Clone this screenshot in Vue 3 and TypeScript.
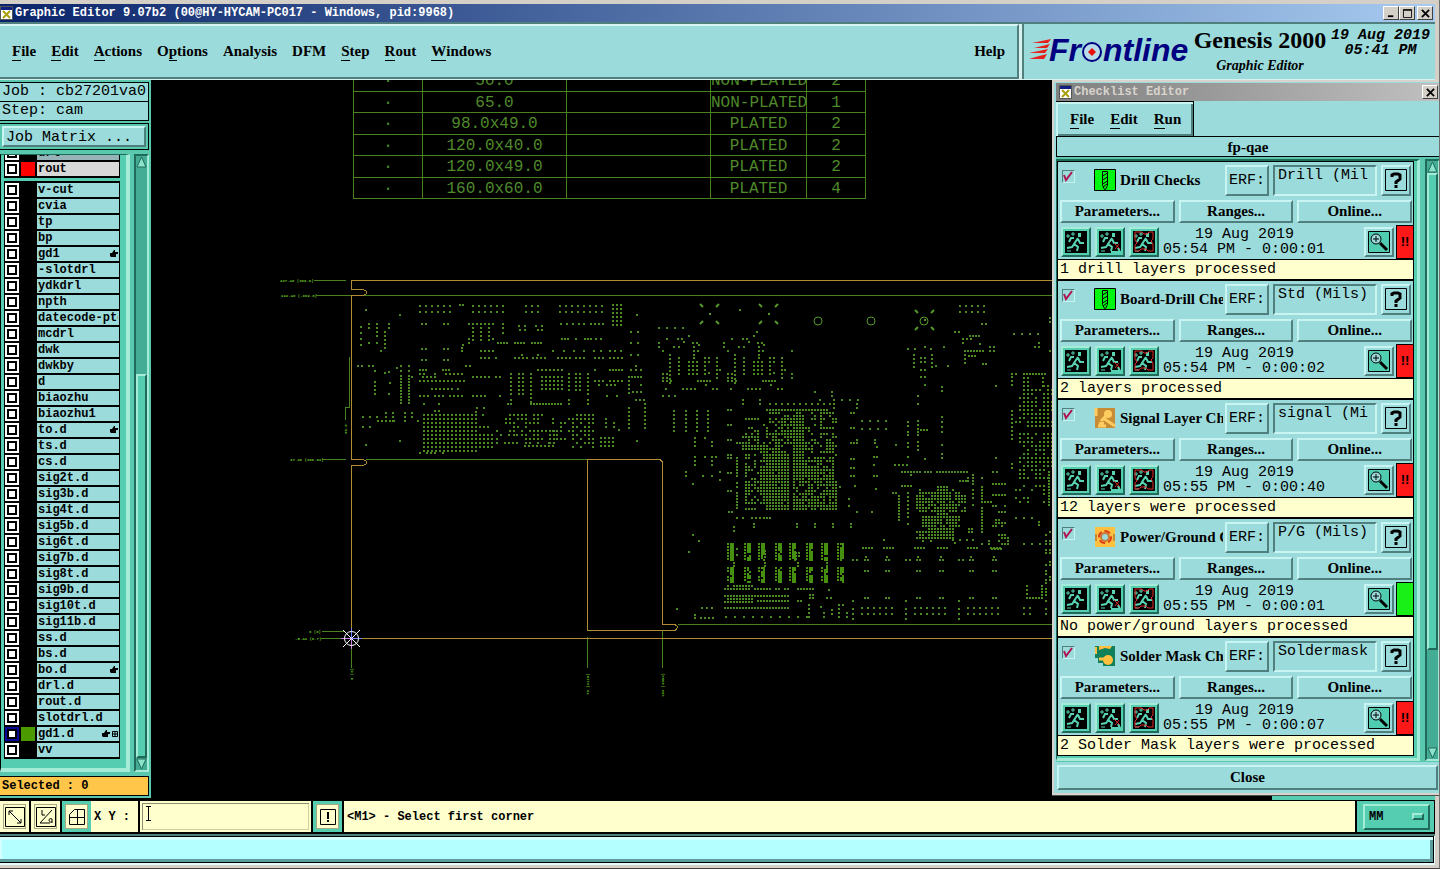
<script setup lang="ts">
import { ref } from 'vue'

interface MenuItem { before: string; key: string; after: string }
interface Layer { name: string; color?: string; active?: boolean; tone?: string; hand?: boolean; grid?: boolean }
interface Check {
  title: string; icon: string; erf: string; stamp: string; message: string; ok?: boolean
}
type Grid = [number, number, number?, number?, number?, number?, number?]

const menus: MenuItem[] = [
  { before: '', key: 'F', after: 'ile' },
  { before: '', key: 'E', after: 'dit' },
  { before: '', key: 'A', after: 'ctions' },
  { before: 'O', key: 'p', after: 'tions' },
  { before: 'Analysis', key: '', after: '' },
  { before: 'DFM', key: '', after: '' },
  { before: '', key: 'S', after: 'tep' },
  { before: '', key: 'R', after: 'out' },
  { before: '', key: 'W', after: 'indows' },
]
const checkMenus: MenuItem[] = [
  { before: '', key: 'F', after: 'ile' },
  { before: '', key: 'E', after: 'dit' },
  { before: '', key: 'R', after: 'un' },
]

const topLayers: Layer[] = [
  { name: 'drl', tone: 'dim' },
  { name: 'rout', color: '#ff0000', tone: 'grey' },
]
const layers: Layer[] = [
  ...['v-cut', 'cvia', 'tp', 'bp'].map((name) => ({ name })),
  { name: 'gd1', hand: true },
  ...['-slotdrl', 'ydkdrl', 'npth', 'datecode-pto', 'mcdrl', 'dwk', 'dwkby', 'd', 'biaozhu', 'biaozhu1'].map((name) => ({ name })),
  { name: 'to.d', hand: true },
  ...['ts.d', 'cs.d', 'sig2t.d', 'sig3b.d', 'sig4t.d', 'sig5b.d', 'sig6t.d', 'sig7b.d', 'sig8t.d', 'sig9b.d', 'sig10t.d', 'sig11b.d', 'ss.d', 'bs.d'].map((name) => ({ name })),
  { name: 'bo.d', hand: true },
  ...['drl.d', 'rout.d', 'slotdrl.d'].map((name) => ({ name })),
  { name: 'gd1.d', color: '#4a9a00', active: true, hand: true, grid: true },
  { name: 'vv' },
]
const groups: Layer[][] = [topLayers, layers]

const checks = ref<Check[]>([
  { title: 'Drill Checks', icon: 'drill', erf: 'Drill (Mil', stamp: '05:54 PM - 0:00:01', message: '1 drill layers processed' },
  { title: 'Board-Drill Checks', icon: 'drill', erf: 'Std (Mils)', stamp: '05:54 PM - 0:00:02', message: '2 layers processed' },
  { title: 'Signal Layer Checks', icon: 'signal', erf: 'signal (Mi', stamp: '05:55 PM - 0:00:40', message: '12 layers were processed' },
  { title: 'Power/Ground Checks', icon: 'power', erf: 'P/G (Mils)', stamp: '05:55 PM - 0:00:01', message: 'No power/ground layers processed', ok: true },
  { title: 'Solder Mask Checks', icon: 'mask', erf: 'Soldermask', stamp: '05:55 PM - 0:00:07', message: '2 Solder Mask layers were processed' },
])

const drillTable: string[][] = [
  ['·', '50.0', '', 'NON-PLATED', '2'],
  ['·', '65.0', '', 'NON-PLATED', '1'],
  ['·', '98.0x49.0', '', 'PLATED', '2'],
  ['·', '120.0x40.0', '', 'PLATED', '2'],
  ['·', '120.0x49.0', '', 'PLATED', '2'],
  ['·', '160.0x60.0', '', 'PLATED', '4'],
]

/* Pad arrays: x, y, columns, rows, x pitch, y pitch, fill ratio */
const connector: Grid[] = [
  [658, 342, 1, 2, 0, 4], [666, 338], [677, 338, 2, 1, 4], [683, 341], [688, 335], [692, 342, 2, 1, 4], [698, 344],
  [673, 346, 2, 1, 5], [662, 350], [693, 346, 1, 3, 0, 4], [697, 350], [669, 354, 1, 8, 0, 4], [678, 357, 1, 5, 0, 4],
  [688, 361, 3, 4, 4, 4], [693, 357], [704, 357, 2, 2, 4, 4], [704, 365, 1, 3, 0, 4], [708, 372], [716, 357, 1, 6, 0, 4],
  [719, 369], [697, 380, 5, 1, 3], [682, 388, 4, 1, 4], [712, 388, 2, 1, 4], [705, 384], [662, 373, 2, 2, 4, 4], [662, 380, 3, 1, 4], [665, 388],
]
const combs: Grid[] = [727, 744, 758, 775, 789, 806, 821, 837].flatMap((x) => [
  [x, 543, 1, 6, 3, 3], [x + 3, 543, 2, 9, 2, 2, 0.88], [x, 567, 1, 5, 3, 3, 0.8], [x + 3, 567, 2, 8, 2, 2, 0.88],
] as Grid[])
const pads: Grid[] = [
  [419, 305, 6, 2, 6, 6], [459, 304, 2, 1, 3], [472, 305, 6, 2, 6, 6], [525, 305, 3, 2, 6, 6], [559, 305, 8, 2, 6, 6],
  [612, 304, 3, 6, 4, 4], [636, 314], [365, 309], [399, 314],
  [421, 323, 2, 1, 4], [443, 323, 2, 1, 4], [468, 323, 7, 1, 4], [502, 323], [560, 323, 4, 1, 6], [583, 323], [590, 323, 4, 1, 4],
  [360, 326, 1, 4, 0, 6], [368, 323, 1, 2, 0, 4], [368, 342], [376, 323, 1, 4, 0, 4], [376, 342], [388, 323, 1, 2, 0, 4], [384, 331, 1, 5, 0, 4], [380, 350],
  [472, 327, 1, 4, 0, 4], [468, 338, 1, 2, 0, 4], [480, 327, 1, 4, 0, 4], [488, 327, 1, 4, 0, 4], [492, 338], [502, 327, 1, 2, 0, 5],
  [518, 325], [524, 325], [519, 329, 2, 1, 5], [535, 325], [541, 325], [537, 329, 2, 1, 4],
  [497, 342, 4, 1, 3], [514, 342, 4, 1, 3], [531, 342, 4, 1, 3], [561, 338, 3, 1, 3], [575, 338], [584, 338, 3, 1, 3], [595, 338, 2, 1, 5],
  [462, 344], [461, 347], [461, 350], [421, 348, 2, 1, 4], [443, 348, 2, 1, 4], [421, 359, 2, 1, 4], [443, 359, 2, 1, 4],
  [480, 350, 4, 1, 4], [552, 350], [563, 350, 2, 1, 10], [583, 350, 2, 1, 10], [600, 350], [609, 350, 2, 1, 5], [620, 350],
  [480, 357, 3, 1, 4], [495, 357], [514, 357, 4, 1, 4], [521, 354], [532, 357, 4, 1, 4], [537, 354], [557, 357, 4, 1, 4], [575, 357, 3, 1, 4], [594, 357, 3, 1, 4], [609, 357, 4, 1, 4],
  [630, 331, 2, 1, 7], [630, 342, 2, 1, 7], [630, 354, 2, 1, 7], [357, 365, 2, 1, 4], [368, 365, 2, 1, 4], [465, 365, 2, 1, 4],
  [374, 370], [374, 381, 1, 4, 0, 4], [384, 372], [388, 371], [389, 382], [388, 393], [396, 367], [411, 376], [400, 365, 1, 3, 0, 5], [400, 378, 1, 4, 0, 3],
  [400, 390, 1, 5, 0, 3], [408, 365, 1, 3, 0, 5], [408, 378, 1, 4, 0, 3], [408, 390, 1, 5, 0, 3],
  [419, 369, 3, 1, 3], [442, 369, 3, 1, 3], [419, 373, 2, 1, 4], [434, 373], [445, 373, 5, 1, 4], [419, 380, 12, 1, 4], [422, 376, 4, 1, 4], [431, 388, 6, 1, 4], [457, 388],
  [419, 395, 3, 1, 4], [434, 395, 3, 1, 4], [449, 395, 4, 1, 4], [423, 403], [438, 403], [472, 376, 4, 1, 4], [488, 376], [495, 376, 2, 1, 4],
  [472, 395, 4, 1, 4], [499, 395], [476, 407, 2, 1, 7], [475, 411], [482, 414],
  [510, 373, 1, 6, 0, 4], [510, 399, 1, 2, 0, 4], [507, 403], [518, 373, 2, 6, 4, 4], [530, 373, 1, 8, 0, 4], [530, 403, 11, 1, 3],
  [537, 369, 7, 1, 4], [541, 376, 6, 4, 4, 4], [568, 373, 1, 5, 0, 4], [568, 399, 1, 2, 0, 4], [575, 373, 2, 5, 4, 4], [587, 373, 1, 6, 0, 4], [587, 399, 1, 2, 0, 4],
  [594, 369], [609, 369, 5, 1, 3], [594, 380, 3, 1, 4], [609, 380, 4, 1, 4], [598, 384, 5, 1, 4, 4, 0.7], [606, 395, 2, 1, 10],
  [628, 376, 5, 1, 3], [628, 380, 1, 4, 0, 4], [640, 384], [640, 391], [632, 391, 2, 1, 4], [635, 365], [630, 369, 3, 1, 5], [635, 399, 3, 1, 4], [628, 407, 1, 6, 0, 4], [644, 403, 1, 7, 0, 4],
  [434, 410, 2, 1, 4], [423, 414, 14, 10, 4, 4], [479, 434, 4, 4, 4, 4], [419, 452], [426, 452, 3, 1, 4], [442, 452],
  [479, 418, 4, 3, 4, 4, 0.35], [496, 430, 8, 4, 4, 4, 0.35], [505, 414, 10, 6, 4, 4, 0.65], [525, 430, 8, 4, 4, 4, 0.7], [524, 445, 8, 1, 4], [548, 418, 6, 7, 4, 4, 0.3],
  [572, 414, 6, 9, 4, 4, 0.65], [600, 437, 4, 3, 4, 4], [605, 418, 1, 3, 0, 4], [613, 422, 1, 2, 0, 4], [618, 429],
  [362, 416, 3, 1, 7], [362, 426, 2, 1, 7], [377, 420, 5, 1, 4], [385, 412, 1, 3, 0, 4], [392, 412, 1, 3, 0, 4], [404, 412, 1, 3, 0, 4], [411, 412, 1, 2, 0, 4], [417, 420], [365, 444], [399, 440], [636, 440],
  ...connector, ...connector.map(([x, y, ...r]) => [x + 65, y, ...r] as Grid),
  [658, 327, 4, 1, 8], [756, 331], [739, 309], [791, 350], [791, 373, 1, 2, 0, 4], [662, 395, 3, 1, 6], [742, 399, 1, 2, 0, 4], [759, 399, 1, 2, 0, 4],
  [673, 410, 1, 6, 0, 4], [685, 410, 1, 6, 0, 4], [696, 410, 1, 6, 0, 4], [707, 410, 1, 6, 0, 4],
  [694, 437, 1, 3, 0, 4], [704, 437], [711, 441, 1, 2, 0, 4], [694, 456, 1, 3, 0, 4], [711, 456, 1, 3, 0, 4], [704, 456], [715, 456],
  [685, 471, 1, 2, 0, 4], [702, 475, 2, 1, 9], [719, 471, 1, 2, 0, 8], [692, 483],
  [727, 409, 2, 1, 3], [727, 424, 2, 1, 3], [727, 439, 2, 1, 3], [727, 454, 2, 2, 3, 3], [727, 472, 2, 1, 3], [727, 490, 2, 1, 3], [728, 511, 2, 1, 3],
  [736, 442, 2, 1, 3], [736, 457, 1, 7, 0, 3], [736, 482, 1, 2, 0, 4], [736, 492, 1, 6, 0, 3],
  [769, 403, 11, 1, 6], [766, 409, 21, 1, 3], [769, 412, 4, 1, 3], [781, 412, 18, 2, 3, 3, 0.6],
  [745, 418, 5, 1, 3], [763, 418, 6, 8, 3, 3, 0.5], [781, 418, 7, 10, 3, 3, 0.8], [793, 418, 4, 17, 3, 3], [805, 418, 8, 12, 3, 3, 0.4], [820, 418, 6, 16, 3, 3, 0.45],
  [745, 427, 5, 5, 3, 3, 0.6], [742, 436, 6, 5, 3, 3, 0.9], [757, 442, 10, 6, 3, 3, 0.65], [826, 442, 3, 4, 3, 3],
  [745, 454, 6, 17, 3, 3, 0.6], [763, 454, 9, 19, 3, 3, 0.95], [793, 466, 14, 15, 3, 3, 0.82], [793, 457, 14, 3, 3, 3, 0.5], [826, 481, 4, 10, 3, 3, 0.85], [745, 508, 4, 1, 3],
  [736, 517, 2, 1, 6], [751, 517, 3, 1, 4], [763, 517, 3, 1, 3], [733, 526, 1, 2, 0, 4], [753, 523, 1, 2, 0, 3], [796, 523, 1, 2, 0, 3], [814, 523, 1, 2, 0, 3], [832, 523, 1, 2, 0, 3], [850, 523, 1, 2, 0, 3],
  [814, 391], [819, 399], [831, 391, 1, 2, 0, 4], [833, 399, 4, 1, 8], [833, 403, 1, 2, 0, 4], [856, 403, 1, 2, 0, 4], [850, 412, 2, 1, 3], [850, 427, 2, 1, 3],
  [850, 442, 3, 1, 3], [856, 439], [850, 458, 2, 1, 3], [861, 420, 4, 2, 8, 8], [874, 439, 1, 2, 0, 3], [876, 446], [873, 456, 2, 1, 3], [873, 464], [873, 475, 2, 1, 3],
  [895, 444], [907, 421, 1, 2, 0, 4], [907, 431, 1, 2, 0, 3], [907, 442, 1, 2, 0, 4], [907, 456], [917, 395, 1, 2, 0, 8], [917, 420, 1, 2, 0, 4], [917, 428, 1, 3, 0, 3],
  [920, 429, 3, 1, 3], [917, 441, 1, 3, 0, 4], [941, 386, 1, 2, 0, 4], [941, 416, 1, 4, 0, 5], [941, 444], [941, 453, 1, 2, 0, 4], [924, 458], [894, 464, 4, 1, 4],
  [907, 348, 2, 1, 7], [924, 346], [930, 348], [943, 346], [913, 354, 1, 4, 0, 4], [920, 357, 2, 2, 4, 4], [920, 369, 2, 1, 4], [920, 376, 2, 1, 4], [931, 354, 1, 4, 0, 4], [935, 365], [947, 365], [924, 384],
  [959, 305, 5, 2, 6, 6], [981, 323, 2, 1, 4], [954, 331, 2, 1, 4], [969, 335, 4, 1, 3], [962, 338, 3, 1, 4], [962, 342], [979, 343], [964, 350, 7, 1, 3], [964, 354, 1, 3, 0, 4], [968, 355, 3, 1, 3], [989, 346, 2, 2, 4, 4], [982, 363, 2, 1, 3],
  [1013, 333, 4, 1, 8], [1038, 342, 1, 2, 0, 4], [1034, 346], [1049, 317, 1, 2, 0, 4], [1049, 350], [995, 385], [995, 457],
  [1011, 373, 2, 1, 4], [1011, 376, 1, 3, 0, 4], [1023, 373, 8, 1, 3], [1023, 377, 2, 4, 4, 4], [1042, 377, 1, 3, 0, 4], [1019, 385, 9, 9, 4, 4, 0.75], [1011, 410, 1, 8, 0, 4], [1015, 421, 2, 1, 4], [1027, 421, 7, 2, 4, 4], [1019, 433, 9, 9, 4, 4, 0.75],
  [901, 471, 7, 1, 3], [924, 471, 3, 1, 3], [936, 471, 11, 1, 3], [910, 474], [959, 480, 3, 1, 3], [967, 477, 1, 2, 0, 3], [892, 492, 2, 1, 3], [898, 495, 1, 9, 0, 3], [901, 485, 4, 1, 3], [907, 492, 1, 7, 0, 4], [907, 523],
  [916, 489, 2, 3, 3, 3, 0.6], [919, 492, 6, 7, 3, 3, 0.9], [937, 486, 4, 10, 3, 3, 0.9], [949, 495, 6, 6, 3, 3, 0.8], [916, 498, 1, 4, 3, 3], [922, 516, 13, 4, 3, 3, 0.9], [928, 528, 9, 1, 3], [916, 531, 13, 3, 3, 3, 0.9], [949, 489, 4, 2, 3, 3, 0.6],
  [922, 540, 2, 1, 8], [952, 539, 3, 1, 7], [954, 542], [972, 474, 1, 4, 0, 3], [972, 489, 1, 3, 0, 4], [972, 504], [968, 528, 2, 2, 3, 3], [981, 477], [981, 486, 1, 5, 0, 3], [981, 501, 4, 1, 3], [981, 507, 1, 9, 0, 3], [972, 539], [981, 543],
  [992, 471, 2, 1, 4], [992, 483, 5, 1, 3], [992, 494, 5, 1, 3], [992, 505, 5, 3, 3, 3, 0.5], [992, 519, 5, 3, 3, 3, 0.6], [988, 540, 1, 2, 0, 3], [998, 534, 4, 4, 3, 3, 0.55], [991, 548, 4, 1, 3],
  [1011, 463, 1, 2, 0, 4], [1019, 469, 8, 3, 4, 4, 0.6], [1015, 485, 8, 5, 4, 4, 0.4], [1048, 471, 1, 12, 0, 3], [1015, 517, 3, 1, 8], [1038, 521, 1, 2, 0, 3], [1007, 543], [1023, 543, 3, 1, 8],
  [1045, 531, 2, 18, 4, 3, 0.55], [1026, 585, 1, 3, 0, 4], [1026, 597, 6, 1, 3], [1041, 585, 2, 4, 4, 3, 0.7],
  [692, 534], [698, 540], [688, 551], [839, 486], [848, 498, 1, 2, 0, 7], [856, 511], [871, 511], [883, 539], [850, 467, 2, 1, 3], [850, 475, 2, 1, 3], [854, 485], [875, 488],
  [724, 588, 22, 1, 3, 3, 0.85], [727, 585, 10, 1, 3, 3, 0.6], [724, 595, 22, 1, 3], [724, 601, 10, 1, 3], [727, 598, 9, 1, 3], [757, 600, 11, 1, 3], [724, 607, 22, 1, 3], [725, 616, 10, 1, 9],
  [797, 588, 6, 1, 3], [809, 594, 2, 2, 3, 3], [797, 600, 2, 1, 3], [808, 604, 1, 4, 0, 4], [828, 589], [826, 597, 2, 1, 4], [820, 606], [823, 612, 1, 2, 0, 4], [831, 609, 1, 2, 0, 4], [838, 604, 2, 1, 4], [838, 608, 1, 3, 0, 4], [846, 612, 1, 2, 0, 4],
  [676, 608], [694, 614, 1, 2, 0, 3], [701, 607, 3, 1, 5], [700, 617, 2, 1, 4], [708, 617, 2, 1, 4],
  [733, 548, 2, 3, 3, 3, 0.5], [764, 550, 1, 3, 3, 3], [795, 549, 2, 4, 3, 3, 0.5], [826, 546, 1, 3, 3, 3], [733, 562, 1, 2, 3, 3], [764, 562, 1, 2, 3, 3], [797, 562, 1, 2, 3, 3], [826, 562, 1, 2, 3, 3],
  ...[862, 883, 914, 937, 967, 990].flatMap((x) => [[x, 547, 4, 1, 3], [x + 3, 556], [x + 2, 559, 2, 1, 3], [x + 2, 570, 2, 1, 3], [x + 2, 597, 2, 1, 3]] as Grid[]),
  ...[852, 905, 958].flatMap((x) => [[x, 559, 2, 1, 4], [x, 600], [x, 608, 1, 3, 0, 5], [x + 9, 607, 6, 2, 6, 6]] as Grid[]),
  [1023, 607, 2, 2, 6, 6], [1045, 600], [1045, 608, 1, 2, 0, 5],
]

function hash(a: number, b: number): number {
  const v = Math.sin(a * 12.9898 + b * 78.233) * 43758.5453
  return v - Math.floor(v)
}
function dots(grids: Grid[], size: number): string {
  let d = ''
  for (const [x, y, cols = 1, rows = 1, dx = 4, dy = 4, fill = 1] of grids) {
    for (let r = 0; r < rows; r++) {
      for (let c = 0; c < cols; c++) {
        const px = x + c * dx
        const py = y + r * dy
        if (fill < 1 && hash(px, py) > fill) continue
        d += `M${px} ${py}h${size}v${size}h-${size}z`
      }
    }
  }
  return d
}
const padPath = dots(pads, 2)
const combPath = dots(combs, 2)
const fiducials = [[709, 314], [768, 314], [924, 320]]
const units = ref('MM')
const coords = ref('')
</script>

<template>
  <div class="app">
    <header class="titlebar">
      <svg class="winicon" viewBox="0 0 13 14"><path fill="#fff" stroke="#555" d="M.5.5h12v13H.5z" /><path fill="#102080" d="M1 1h11v3H1z" /><path stroke="#a8a010" stroke-width="2" d="M3 5l7 7M10 5l-7 7" /></svg>
      <h1>Graphic Editor 9.07b2 (00@HY-HYCAM-PC017 - Windows, pid:9968)</h1>
      <div class="winbtns">
        <button aria-label="Minimize"><svg viewBox="0 0 12 10"><path fill="#000" d="M2 7h6v2H2z" /></svg></button>
        <button aria-label="Maximize"><svg viewBox="0 0 12 10"><path fill="none" stroke="#000" d="M1.500 .5h9v9h-9zM1.500 1.500h9" /></svg></button>
        <button class="x" aria-label="Close window"><svg viewBox="0 0 12 10"><path stroke="#000" stroke-width="2" d="M2 1l8 8M10 1l-8 8" /></svg></button>
      </div>
    </header>

    <div class="top">
      <nav class="menubar">
        <button v-for="m in menus" :key="m.before + m.key + m.after">{{ m.before }}<u v-if="m.key">{{ m.key }}</u>{{ m.after }}</button>
        <button class="help">Help</button>
      </nav>
      <div class="brand">
        <svg class="logo" viewBox="0 0 162 44" role="img" aria-label="Frontline">
          <path fill="#e8201c" d="M24 12l-3 4H5zM23 17l-3 4H7zM21 22l-3 4H2zM20 27l-3 5H2l10-3z" />
          <g class="word"><text x="22" y="34">Fr</text><text x="76" y="34">ntline</text></g>
          <circle cx="65" cy="25" r="9" fill="#b8dce8" stroke="#000080" stroke-width="2" />
          <path fill="#e8100c" d="M65 21l4 4-4 4-4-4z" />
        </svg>
        <div class="product"><strong>Genesis 2000</strong><em>Graphic Editor</em></div>
        <div class="clock"><span>19 Aug 2019</span><span>05:41 PM</span></div>
      </div>
    </div>

    <main class="work">
      <aside class="side">
        <div class="info">Job : cb27201va0</div>
        <div class="info step">Step: cam</div>
        <div class="matrix"><button>Job Matrix ...</button></div>
        <div class="listwrap">
          <div class="listframe">
            <ul v-for="(g, i) in groups" :key="i" class="layers">
              <li v-for="l in g" :key="l.name">
                <label>
                  <input type="checkbox" :class="{ active: l.active }" />
                  <span class="swatch" :style="{ background: l.color ?? '#000' }"></span>
                  <span class="lname" :class="l.tone"><span class="txt">{{ l.name }}</span>
                    <svg v-if="l.hand" class="hand" viewBox="0 0 8 8"><path d="M0 3h2l2-3h1v2h3v2H6v3H1L0 6z" /></svg>
                    <svg v-if="l.grid" class="gridmark" viewBox="0 0 6 6"><path fill="none" stroke="#000" d="M.5.5h5v5h-5zM3 0v6M0 3h6" /></svg>
                  </span>
                </label>
              </li>
            </ul>
          </div>
          <div class="scroll">
            <svg viewBox="0 0 11 12"><path fill="#8ce4cc" stroke="#1f6a58" d="M5.500 1L1 11h9z" /></svg>
            <div class="track"><div class="rest"></div><div class="thumb"></div></div>
            <svg viewBox="0 0 11 12"><path fill="#8ce4cc" stroke="#1f6a58" d="M1 1h9L5.500 11z" /></svg>
          </div>
        </div>
        <div class="selected">Selected : 0</div>
      </aside>

      <section class="canvas">
        <svg class="board">
          <g transform="translate(-151 -80)">
            <g fill="none" stroke="#47821f" shape-rendering="crispEdges">
              <path d="M314 280.500H346M316 295.500H1100M322 459.500H346M366 459.500H588M678 624.500H1100M321 638.500H350M322 631.500H345M351.500 645V668M587.500 637V668M662.500 631V668M349.500 357V407H345.500V420" />
              <path stroke="#b08c32" d="M1100 280.500H351.500V289.500H363L366 291V294L363 295.500H351.500V459.500H363L366 461V464L363 465.500H351.500V638.500H1100M587.500 459.500H660L662.500 462V624.500H675L678 627L675 630.500H587.500Z" />
            </g>
            <path :d="padPath" fill="#4b8a22" shape-rendering="crispEdges" />
            <path :d="combPath" fill="#46900f" shape-rendering="crispEdges" />
            <g fill="none" stroke="#55982a">
              <circle cx="818" cy="321" r="4" /><circle cx="871" cy="321" r="4" /><circle cx="924" cy="321" r="4" />
              <g v-for="f in fiducials" :key="f[0]" :transform="`translate(${f[0]} ${f[1]})`">
                <path stroke-width="2" d="M-9 -10l3 3M10 -10l-3 3M-9 10l3 -3M10 10l-3 -3M0 0h2" />
              </g>
            </g>
            <g class="dims">
              <text x="280" y="282">227.40 (900.0)</text>
              <text x="281" y="297">222.40 (-902.0)</text>
              <text x="290" y="461">97.46 (380.04)</text>
              <text x="309" y="633">0 (0)</text>
              <text x="295" y="640">-5.44 (0.7)</text>
              <text transform="translate(353 680) rotate(-90)">0 (0)</text>
              <text transform="translate(589 695) rotate(-90)">79 (3110)</text>
              <text transform="translate(664 697) rotate(-90)">104 (4094)</text>
              <text transform="translate(347 434) rotate(-90)">98.0</text>
            </g>
            <g fill="none">
              <path stroke="#6f7cff" d="M351.500 628v10M352 638.500h10" /><path stroke="#c884e0" d="M341 638.500h10M351.500 639v10" />
              <circle cx="351.500" cy="638.500" r="7" stroke="#fff" /><path stroke="#fff" d="M343 630l17 17M360 630l-17 17" />
            </g>
          </g>
        </svg>
        <table class="drills">
          <colgroup><col class="c1" /><col class="c2" /><col class="c2" /><col class="c3" /><col class="c4" /></colgroup>
          <tbody><tr v-for="(r, i) in drillTable" :key="i"><td v-for="(c, j) in r" :key="j">{{ c }}</td></tr></tbody>
        </table>
        <div class="edge"></div>
      </section>
    </main>

    <footer class="status">
      <button class="tool" aria-label="Zoom area"><svg viewBox="0 0 20 20"><path d="M.5.5h19v19H.5zM4 4l12 12M4 8V4h4M16 12v4h-4" /></svg></button>
      <button class="tool" aria-label="Angle"><svg viewBox="0 0 20 20"><path d="M.5.5h19v19H.5zM16 3L4 16h10M6 3v5h3M16 12c-4-2-4 4 0 3M16 12v4" /></svg></button>
      <button class="tool teal" aria-label="Grid"><svg viewBox="0 0 20 20"><path d="M2.500 17.500v-10l5-5h10v15zM2.500 10.500h15M10.500 2.500v15" /></svg></button>
      <label class="xy" for="xy">X Y :</label>
      <input id="xy" v-model="coords" type="text" class="xyin" />
      <span class="caret"><svg viewBox="0 0 7 15"><path d="M1 .5h5M1 14.500h5M3.500 1v13" /></svg></span>
      <button class="tool teal bang" aria-label="Alert"><svg viewBox="0 0 20 20"><path d="M2.500 2.500h15v15h-15z" /><path stroke-width="2" d="M10 5v7M10 13v2" /></svg></button>
      <p class="prompt">&lt;M1&gt; - Select first corner</p>
      <div class="unit"><select v-model="units" aria-label="Units"><option>MM</option><option>INCH</option></select><i></i></div>
    </footer>
    <div class="progress"><div></div></div>

    <section class="dialog">
      <header class="dlgtitle">
        <svg class="winicon" viewBox="0 0 13 14"><path fill="#fff" stroke="#555" d="M.5.5h12v13H.5z" /><path fill="#102080" d="M1 1h11v3H1z" /><path stroke="#a8a010" stroke-width="2" d="M3 5l7 7M10 5l-7 7" /></svg>
        <h2>Checklist Editor</h2>
        <div class="winbtns"><button aria-label="Close checklist"><svg viewBox="0 0 12 10"><path stroke="#000" stroke-width="2" d="M2 1l8 8M10 1l-8 8" /></svg></button></div>
      </header>
      <nav class="dlgmenu"><button v-for="m in checkMenus" :key="m.key"><u>{{ m.key }}</u>{{ m.after }}</button></nav>
      <div class="dlgname">fp-qae</div>
      <div class="dlgbody">
        <div class="cards">
          <article v-for="(c, i) in checks" :key="c.title" class="card">
            <div class="rowa">
              <label class="tick"><input type="checkbox" checked :aria-label="c.title" /><svg viewBox="0 0 12 12"><path fill="none" stroke="#b01050" stroke-width="2" d="M2 5l2 5 6-8" /></svg></label>
              <svg v-if="c.icon === 'drill'" class="cicon" viewBox="0 0 22 22"><path fill="#00f810" stroke="#000" d="M.5.5h21v21H.5z" /><path fill="none" stroke="#000" d="M8.500 2.500h5v14l-2 4h-1l-2-4zM8.500 7l5-3M8.500 11l5-3M8.500 15l5-3M9 18l4-3" /></svg>
              <svg v-else-if="c.icon === 'signal'" class="cicon" viewBox="0 0 22 22"><path fill="#c88c34" d="M1 1h20v20H1z" /><path stroke="#ffcc60" stroke-width="3" d="M14 7L7 14M9 11l12 8M2 1v8M4 19h8" /><circle cx="14" cy="7" r="4" fill="#ffcc60" /><path fill="#ffcc60" d="M5 15h5v3H5z" /></svg>
              <svg v-else-if="c.icon === 'power'" class="cicon" viewBox="0 0 22 22"><path fill="#ffc040" d="M1 1h20v20H1z" /><circle cx="11" cy="11" r="6" fill="none" stroke="#e03818" stroke-width="2" stroke-dasharray="6 3" /><circle cx="11" cy="11" r="4" fill="#9cdbdb" stroke="#c87838" stroke-width="2" /><path fill="#c88c34" d="M1 8h2v7H1zM19 8h2v7h-2z" /></svg>
              <svg v-else class="cicon" viewBox="0 0 22 22"><path fill="#108058" d="M1 1h20v20H9v-3H4v-5H1z" /><path fill="#ffc040" d="M5 1h13l-2 3-5-1-6 2zM1 2h2v7H1z" /><circle cx="14" cy="15" r="5" fill="#ffc040" /><path stroke="#ffc040" stroke-width="3" d="M5 14h8" /></svg>
              <span class="ctitle">{{ c.title }}</span>
              <button class="erf">ERF:</button>
              <input v-model="checks[i].erf" type="text" class="erfin" :aria-label="c.title + ' ERF'" />
              <button class="ask" aria-label="Help on check"><svg viewBox="0 0 22 22"><path fill="none" stroke="#000" d="M.5.5h21v21H.5z" /><path fill="none" stroke="#000" stroke-width="3" d="M7 8V6l2-1h4l2 1v4l-4 3v2M11 16v3" /></svg></button>
            </div>
            <div class="rowb"><button>Parameters...</button><button>Ranges...</button><button>Online...</button></div>
            <div class="rowc">
              <button v-for="n in 3" :key="n" class="run" :aria-label="['Run', 'Run selected', 'Run in profile'][n - 1]">
                <svg viewBox="0 0 22 22"><path fill="#000" d="M0 0h22v22H0z" />
                  <path fill="#58d4b4" d="M13 2h3v4h-3z" />
                  <path fill="none" stroke="#58d4b4" stroke-width="2" d="M13 7l-4 6 4 3-1 4M10 12l-3 4-5 1M9 7H6l-2 4M13 8l2 4h4" />
                  <path stroke="#58d4b4" d="M1 5h4M3 3v4M6 3h4M8 1v4M2 20h4" />
                  <path v-if="n === 2" fill="none" stroke="#58d4b4" stroke-width="2" d="M12 21h9l-2-4" /><path v-if="n === 2" stroke="#d02820" d="M15 12l6 6M20 13l-4 5" />
                  <path v-if="n === 3" fill="none" stroke="#e02828" d="M2 1h7l2 2h3l2-2h4v7l-2 2 2 3v7h-5l-2-2h-5l-2 2H2v-6l2-2-2-3z" />
                </svg>
              </button>
              <div class="stamp"><span>19 Aug 2019</span><span>{{ c.stamp }}</span></div>
              <button class="mag" aria-label="View results"><svg viewBox="0 0 22 22"><path fill="#50ccb0" stroke="#000" d="M.5.5h21v21H.5z" /><circle cx="8" cy="8" r="5" fill="#9cdbdb" stroke="#000" /><path stroke="#000" d="M5 8h6M8 5v6" /><path stroke="#000" stroke-width="3" d="M12 12l7 7" /></svg></button>
              <span class="flag" :class="{ ok: c.ok }">{{ c.ok ? '' : '!!' }}</span>
            </div>
            <p class="msg">{{ c.message }}</p>
          </article>
        </div>
        <div class="scroll">
          <svg viewBox="0 0 11 12"><path fill="#8ce4cc" stroke="#1f6a58" d="M5.500 1L1 11h9z" /></svg>
          <div class="track top-thumb"><div class="thumb"></div><div class="rest"></div></div>
          <svg viewBox="0 0 11 12"><path fill="#8ce4cc" stroke="#1f6a58" d="M1 1h9L5.500 11z" /></svg>
        </div>
      </div>
      <button class="close">Close</button>
    </section>
  </div>
</template>

<style>
body { margin: 0; background: #d4d0c8; }
</style>

<style scoped>
.app, .app * { box-sizing: border-box; }
.app {
  --panel: #9cdbdb; --teal: #54cdb0; --hi: #c8f4f2; --lo: #50807e; --tlo: #1f6a58; --cream: #ffffce;
  --mono: "Liberation Mono", monospace; --serif: "Liberation Serif", serif;
  position: relative; display: flex; flex-direction: column; height: 100vh; min-height: 860px; overflow: hidden;
  padding: 4px 4px 3px 0; background: #d4d0c8; border-bottom: 1px solid #404040; border-right: 1px solid #707070;
  color: #000; font-family: var(--serif); font-size: 15px; font-weight: 700;
}
button { font: inherit; color: inherit; padding: 0; border: 0; background: none; }
h1, h2, p, ul { margin: 0; padding: 0; }
svg { display: block; }

.titlebar, .dlgtitle { display: flex; align-items: center; height: 18px; flex: none; background: linear-gradient(90deg, #0a246a, #a6caf0); }
.winicon { width: 13px; height: 14px; flex: none; }
h1, h2 { flex: 1; margin-left: 2px; font: 700 12px/18px var(--mono); color: #fff; white-space: nowrap; }
.winbtns { display: flex; margin-right: 2px; }
.winbtns button { width: 16px; height: 14px; display: grid; place-items: center; background: #d4d0c8; border: 1px solid; border-color: #fff #404040 #404040 #fff; }
.winbtns .x { margin-left: 2px; }
.winbtns svg { width: 11px; height: 9px; }

.top { display: flex; flex: none; height: 58px; padding-bottom: 1px; gap: 3px; border-top: 2px solid var(--lo); background: #d8f0ee; }
.menubar { flex: 1; display: flex; align-items: center; gap: 15px; padding: 0 12px 0 12px; background: var(--panel); border: 2px solid; border-color: #d8f4f2 var(--lo) var(--lo) var(--panel); border-left: 0; }
.menubar button, .dlgmenu button { line-height: 17px; }
u { display: inline-block; text-decoration: none; border-bottom: 1px solid #000; height: 18px; }
.help { margin-left: auto; }
.brand { width: 413px; display: flex; gap: 3px; background: var(--panel); border-left: 2px solid var(--lo); padding: 2px 0 0 3px; }
.logo { width: 162px; height: 44px; margin-top: 1px; }
.word { font: italic 700 32px "Liberation Sans", sans-serif; fill: #000080; }
.product { display: flex; flex-direction: column; align-items: center; width: 136px; }
.product strong { font-size: 24px; line-height: 29px; white-space: nowrap; }
.product em { font-size: 14px; line-height: 22px; }
.clock { display: flex; flex-direction: column; align-items: center; font: italic 700 15px/15px var(--mono); padding-top: 2px; white-space: nowrap; }

.work { flex: 1; min-height: 0; display: flex; background: #000; }
.side { width: 151px; flex: none; display: flex; flex-direction: column; background: #5ac8ae; padding: 2px 2px 2px 0; margin-bottom: 2px; font: 500 15px/18px var(--mono); white-space: pre; }
.info { height: 20px; border: 1px solid #000; border-left: 0; background: var(--panel); padding-left: 2px; }
.step { margin-top: -1px; }
.matrix { margin-top: 2px; height: 27px; border: 1px solid #000; border-left: 0; padding: 2px; }
.matrix button { width: 100%; height: 100%; text-align: left; line-height: 19px; padding-left: 2px; background: var(--panel); border: 2px solid; border-color: var(--hi) var(--lo) var(--lo) var(--hi); }
.listwrap { flex: 1; min-height: 0; display: flex; gap: 4px; margin: 4px 0; }
.listframe { flex: 1; overflow: hidden; display: flex; flex-direction: column; justify-content: flex-end; gap: 3px; padding: 0 6px 9px 3px; border-top: 1px solid var(--tlo); border-bottom: 4px solid #a4ecd8; border-right: 4px solid #a4ecd8; background: var(--teal); border-left: 1px solid #000; }
.layers { list-style: none; flex: none; background: #000; padding: 1px; }
.layers label { display: flex; align-items: center; gap: 2px; height: 16px; }
.layers input { appearance: none; flex: none; margin: 0; width: 14px; height: 14px; background: #fff; border: 2px solid #fff; outline: 0; box-shadow: inset 0 0 0 2px #000; }
.layers input.active { border-color: #0a0a9a; }
.swatch { width: 14px; height: 14px; flex: none; }
.lname { flex: 1; min-width: 0; height: 14px; display: flex; align-items: center; overflow: hidden; background: var(--panel); font: 700 12px/14px var(--mono); padding: 0 1px; gap: 2px; }
.lname.grey { background: #d8d8d8; }
.lname.dim { background: #96b4b8; }
.txt { flex: 1; min-width: 0; overflow: hidden; }
.hand { width: 8px; height: 8px; }
.gridmark { width: 6px; height: 6px; }
.scroll { width: 15px; flex: none; display: flex; flex-direction: column; background: #44ac94; border: 2px solid; border-color: var(--tlo) #a4ecd8 #a4ecd8 var(--tlo); }
.scroll svg { width: 11px; height: 12px; flex: none; }
.track { flex: 1; display: flex; flex-direction: column; }
.thumb { background: var(--teal); border: 2px solid; border-color: #a4ecd8 var(--tlo) var(--tlo) #a4ecd8; flex: 383; }
.rest { flex: 208; }
.top-thumb .thumb { flex: 476; }
.top-thumb .rest { flex: 98; }
.selected { height: 20px; flex: none; border: 1px solid #000; border-left: 0; background: #ffc64a; font: 700 12px/18px var(--mono); padding-left: 2px; }

.canvas { position: relative; flex: 1; overflow: hidden; background: #000; }
.board { position: absolute; inset: 0; width: 100%; height: 100%; }
.dims text { font: 700 4px var(--mono); fill: #62b822; }
.drills { position: absolute; left: 202px; top: -11px; width: 512px; height: 130px; table-layout: fixed; border-collapse: collapse; color: #4f8a2a; font: 400 16px/18px var(--mono); text-align: center; white-space: nowrap; }
.drills td { border: 1px solid #47821f; padding: 2px 0 0; }
.c1 { width: 69px; } .c2 { width: 144px; } .c3 { width: 96px; } .c4 { width: 59px; }
.edge { position: absolute; right: 0; bottom: 0; width: 163px; height: 4px; background: var(--teal); }

.status { position: relative; flex: none; height: 34px; display: flex; background: #000; padding: 1px 1px 2px 0; gap: 2px; font: 700 12px/14px var(--mono); }
.tool { width: 29px; flex: none; display: grid; place-items: center; background: var(--cream); border: 3px solid var(--cream); box-shadow: inset 0 0 0 1px #a8a880; }
.tool.teal { border-color: var(--teal); }
.tool svg { width: 20px; height: 20px; }
.tool path, .caret path { fill: none; stroke: #000; }
.xy { width: 47px; background: var(--cream); margin-left: -2px; padding: 9px 3px; white-space: pre; }
.xyin { width: 171px; min-width: 0; background: var(--cream); border: 2px solid; border-color: #8c8c70 #d0d0a0 #d0d0a0 #8c8c70; outline: 2px solid var(--cream); outline-offset: -2px; font: inherit; box-shadow: inset 1px 1px #8c8c70, inset -1px -1px #d0d0a0; border-radius: 0; }
.caret { position: absolute; left: 145px; top: 6px; pointer-events: none; }
.caret svg { width: 7px; height: 15px; }
.prompt { flex: 1; background: var(--cream); padding: 9px 3px; }
.unit { position: relative; width: 77px; background: var(--teal); padding: 3px 4px 2px 6px; }
.unit select { appearance: none; width: 100%; height: 100%; padding: 0 4px; border-radius: 0; background: var(--teal); border: 2px solid; border-color: #a4ecd8 var(--tlo) var(--tlo) #a4ecd8; font: inherit; color: #000; }
.unit i { position: absolute; right: 10px; top: 12px; width: 12px; height: 7px; border: 2px solid; border-color: #a4ecd8 var(--tlo) var(--tlo) #a4ecd8; pointer-events: none; }
.progress { flex: none; height: 31px; padding: 2px 1px 0 0; background: linear-gradient(var(--lo) 2px, #e4fcfc 2px); }
.progress div { height: 27px; border: 1px solid #000; border-left: 0; background: #b4ffff; box-shadow: inset 0 3px #d4ffff, inset -3px -3px #5c9c9c, inset 2px 0 #d4ffff; }

.dialog { position: absolute; top: 80px; right: -1px; width: 388px; height: 715px; display: flex; flex-direction: column; padding: 3px 0 2px 2px; background: var(--panel); border: solid #d8d4cc; border-width: 0 0 2px 2px; box-shadow: inset 0 2px #d8d4cc, 0 1px #505050; }
.dlgtitle { background: linear-gradient(90deg, #808080, #c0c0c0); padding-left: 3px; }
.dlgtitle h2 { color: #d8d4cc; }
.dlgmenu { width: 138px; height: 36px; flex: none; display: flex; align-items: center; gap: 16px; padding: 2px 0 0 14px; border: 1px solid #000; border-left: 0; box-shadow: inset 2px 2px var(--hi), inset -2px -2px var(--lo); }
.dlgname { height: 21px; flex: none; margin-top: -1px; border: 1px solid #000; text-align: center; line-height: 20px; }
.dlgbody { flex: 1; min-height: 0; display: flex; gap: 5px; background: #5ac8ae; padding: 2px 0 1px; }
.cards { flex: 1; min-width: 0; border: solid; border-width: 2px 3px 3px 1px; border-color: var(--tlo) #a4ecd8 #a4ecd8 var(--tlo); padding-right: 3px; background: var(--teal); }
.card { height: 119px; border: solid #000; border-width: 1px 1px 2px; background: var(--panel); display: flex; flex-direction: column; }
.rowa, .rowb, .rowc { display: flex; flex: none; }
.rowa { height: 37px; align-items: center; padding: 0 2px 1px 4px; }
.tick { position: relative; align-self: flex-start; margin-top: 8px; width: 13px; height: 13px; flex: none; }
.tick input { appearance: none; margin: 0; width: 13px; height: 13px; display: block; border: 1px solid; border-color: var(--lo) var(--hi) var(--hi) var(--lo); }
.tick svg { position: absolute; left: 0; top: 0; width: 12px; height: 12px; pointer-events: none; }
.cicon { width: 22px; height: 22px; flex: none; margin-left: 19px; }
.ctitle { flex: 1; min-width: 0; overflow: hidden; white-space: nowrap; margin: 0 2px 0 4px; }
.erf, .ask, .rowb button, .mag, .close { border: 2px solid; border-color: var(--hi) var(--lo) var(--lo) var(--hi); }
.erf { width: 44px; height: 31px; font: 400 15px var(--mono); flex: none; }
.erfin { width: 104px; height: 31px; flex: none; margin: 0 4px; padding: 0 0 10px 3px; background: transparent; border: 2px solid; border-color: var(--lo) var(--hi) var(--hi) var(--lo); border-radius: 0; font: 400 15px/17px var(--mono); color: #000; }
.ask { width: 30px; height: 31px; display: grid; place-items: center; flex: none; }
.ask svg, .run svg, .mag svg { width: 22px; height: 22px; }
.rowb { height: 26px; gap: 4px; padding: 1px 1px 2px 2px; }
.rowb button { flex: 1; }
.rowc { height: 34px; align-items: center; padding-left: 3px; }
.run { width: 30px; height: 30px; flex: none; margin-right: 4px; display: grid; place-items: center; background: var(--teal); border: 2px solid; border-color: #a4ecd8 var(--tlo) var(--tlo) #a4ecd8; }
.stamp { flex: 1; display: flex; flex-direction: column; font: 400 15px/15px var(--mono); white-space: pre; }
.stamp span:first-child { padding-left: 32px; }
.mag { width: 30px; height: 30px; display: grid; place-items: center; flex: none; }
.flag { width: 17px; height: 34px; margin-left: 2px; border: 1px solid #000; border-right: 0; background: #ff1818; font: 700 13px/31px "Liberation Sans", sans-serif; text-align: center; flex: none; }
.flag.ok { background: #18f018; }
.msg { flex: 1; background: var(--cream); border-top: 1px solid #000; font: 400 15px/19px var(--mono); padding-left: 2px; }
.close { flex: none; height: 25px; margin: 3px 2px 1px 1px; }
</style>
